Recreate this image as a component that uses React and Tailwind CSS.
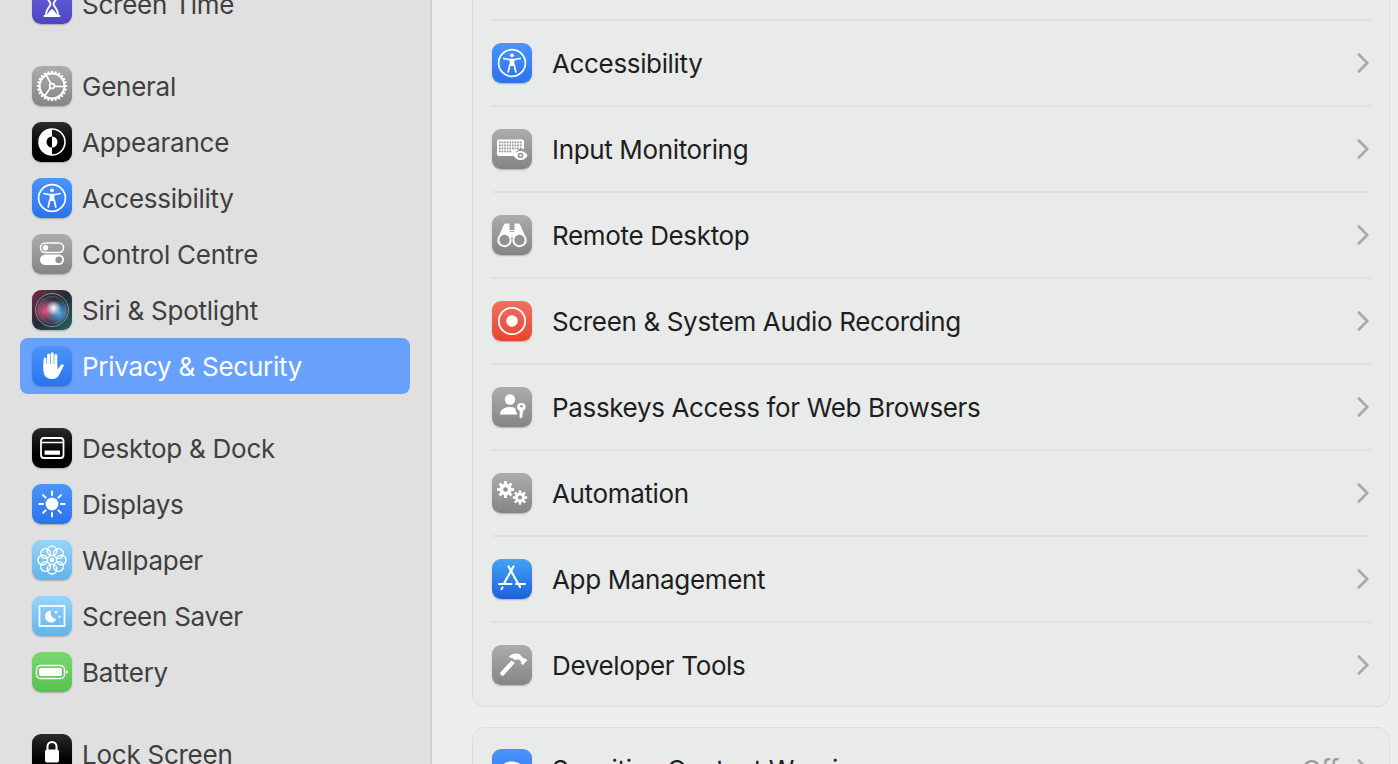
import { useId } from "react";
import { ChevronRight } from "lucide-react";

const Svg = ({ children }) => (
  <svg viewBox="0 0 40 40" className="w-10 h-10 block" fill="none">
    {children}
  </svg>
);

const range = (n) => Array.from({ length: n }, (_, i) => i);

const Cog = ({ cx, cy, r, teeth = 8, toothW = 2, toothH = 2, hole }) => (
  <g>
    {range(teeth).map((i) => (
      <rect
        key={i}
        x={cx - toothW / 2}
        y={cy - r - toothH}
        width={toothW}
        height={toothH + 1}
        fill="#fff"
        transform={`rotate(${(i * 360) / teeth} ${cx} ${cy})`}
      />
    ))}
    <circle cx={cx} cy={cy} r={r} fill="#fff" />
    <circle cx={cx} cy={cy} r={hole} fill="#929295" />
  </g>
);

const GeneralIcon = () => (
  <Svg>
    {range(24).map((i) => (
      <rect
        key={i}
        x="18.9"
        y="4.8"
        width="2.2"
        height="3.4"
        rx="0.6"
        fill="#fff"
        transform={`rotate(${i * 15} 20 20)`}
      />
    ))}
    <circle cx="20" cy="20" r="12.4" stroke="#fff" strokeWidth="2" />
    <g stroke="#fff" strokeWidth="1.7">
      <circle cx="20" cy="20" r="2.4" />
      <path d="M19 17.8 14.500 9.500M22.400 20.300 32 20.500M18.500 21.800 13 29.500" />
    </g>
  </Svg>
);

const AppearanceIcon = () => (
  <Svg>
    <circle cx="20" cy="20" r="13" stroke="#fff" strokeWidth="1.6" />
    <path d="M20 7a13 13 0 0 0 0 26z" fill="#fff" />
    <path d="M20 14.5a5.5 5.5 0 0 0 0 11z" fill="#000" />
    <path d="M20 14.5a5.5 5.5 0 0 1 0 11z" fill="#fff" />
  </Svg>
);

const AccessibilityIcon = () => (
  <Svg>
    <circle cx="20" cy="20" r="13.4" stroke="#fff" strokeWidth="1.7" />
    <circle cx="20" cy="12.300" r="1.900" fill="#fff" />
    <path
      d="M11.800 15.500 17 16.500h6l5.200-1M16.200 29 17.800 22M23.800 29 22.200 22"
      stroke="#fff"
      strokeWidth="1.700"
      strokeLinecap="round"
      strokeLinejoin="round"
    />
    <path d="M17.500 16.500h5l-.4 6.500h-4.200z" fill="#fff" />
  </Svg>
);

const ControlIcon = () => (
  <Svg>
    <rect x="8.5" y="9" width="23" height="9.5" rx="4.75" stroke="#fff" strokeWidth="1.5" />
    <circle cx="13.5" cy="13.8" r="2.8" fill="#fff" />
    <rect x="8" y="20.5" width="24" height="10.5" rx="5.2" fill="#fff" />
    <circle cx="26.8" cy="25.8" r="3.4" fill="#929295" />
  </Svg>
);

const SiriIcon = () => {
  const id = useId();
  return (
    <Svg>
      <defs>
        <radialGradient id={`${id}a`} cx="0.3" cy="0.52" r="0.42">
          <stop offset="0" stopColor="#e8547f" />
          <stop offset="1" stopColor="#e8547f" stopOpacity="0" />
        </radialGradient>
        <radialGradient id={`${id}b`} cx="0.72" cy="0.6" r="0.42">
          <stop offset="0" stopColor="#4fa6e6" />
          <stop offset="1" stopColor="#4fa6e6" stopOpacity="0" />
        </radialGradient>
        <radialGradient id={`${id}c`} cx="0.55" cy="0.44" r="0.24">
          <stop offset="0" stopColor="#fff" />
          <stop offset="1" stopColor="#fff" stopOpacity="0" />
        </radialGradient>
      </defs>
      <circle cx="20" cy="20" r="16.5" fill="#2c3340" stroke="#7f8f92" strokeWidth="1" />
      <circle cx="20" cy="20" r="13.5" stroke="#56636b" strokeWidth="0.8" />
      <circle cx="20" cy="20" r="16" fill={`url(#${id}a)`} />
      <circle cx="20" cy="20" r="16" fill={`url(#${id}b)`} />
      <circle cx="20" cy="20" r="16" fill={`url(#${id}c)`} />
    </Svg>
  );
};

const HandIcon = () => (
  <Svg>
    <g fill="#fff">
      <rect x="11.500" y="11.500" width="3" height="14" rx="1.500" />
      <rect x="15.100" y="7.500" width="3" height="16" rx="1.500" />
      <rect x="18.700" y="6.300" width="3" height="16" rx="1.500" />
      <rect x="22.300" y="8" width="3" height="16" rx="1.500" />
      <path d="M11.500 18v6.500c0 5 3.500 8.500 8.500 8.500 4 0 6-2 7.500-5l4-7.800c.8-1.600-1.500-3-2.700-1.200l-3.600 4.800V18z" />
    </g>
  </Svg>
);

const DesktopIcon = () => (
  <Svg>
    <rect x="9" y="10" width="22.5" height="20" rx="3" stroke="#fff" strokeWidth="1.8" />
    <path d="M9 14.5h22.5" stroke="#fff" strokeWidth="1.4" />
    <rect x="12.5" y="22.5" width="15.5" height="4.2" rx="0.6" fill="#fff" />
  </Svg>
);

const DisplaysIcon = () => (
  <Svg>
    <circle cx="20" cy="20" r="6.4" fill="#fff" />
    {range(8).map((i) => (
      <path
        key={i}
        d="M20 7.4v3.6"
        stroke="#fff"
        strokeWidth="2"
        strokeLinecap="round"
        transform={`rotate(${i * 45} 20 20)`}
      />
    ))}
  </Svg>
);

const WallpaperIcon = () => (
  <Svg>
    {range(8).map((i) => (
      <circle
        key={i}
        cx="20"
        cy="10.800"
        r="4.800"
        stroke="#fff"
        strokeWidth="1.400"
        transform={`rotate(${i * 45} 20 20)`}
      />
    ))}
    <circle cx="20" cy="20" r="2.4" fill="#fff" />
  </Svg>
);

const ScreenSaverIcon = () => (
  <Svg>
    <rect x="7.5" y="10" width="25" height="20" stroke="#fff" strokeWidth="1.7" />
    <path d="M19 14.5a6 6 0 1 0 5.2 9 6.6 6.6 0 0 1-5.2-9z" fill="#fff" />
    <path
      d="M24 14l.6 1.6 1.6.6-1.6.6-.6 1.6-.6-1.6-1.6-.6 1.6-.6zM27.5 19l.5 1.3 1.3.5-1.3.5-.5 1.3-.5-1.3-1.3-.5 1.3-.5z"
      fill="#fff"
    />
  </Svg>
);

const BatteryIcon = () => (
  <Svg>
    <rect x="4.5" y="13.5" width="28" height="13" rx="4" stroke="#fff" strokeWidth="1.3" />
    <rect x="7" y="16" width="23" height="8" rx="2" fill="#fff" />
    <path d="M34 18v4c1-.3 1.6-1.1 1.6-2s-.6-1.700-1.600-2z" fill="#fff" />
  </Svg>
);

const LockIcon = () => (
  <Svg>
    <path d="M15.500 16v-3.500a4.500 4.500 0 0 1 9 0V16" stroke="#fff" strokeWidth="2" />
    <rect x="13" y="15.500" width="14" height="13" rx="2" fill="#fff" />
    {range(5).map((i) => (
      <circle key={i} cx={12 + i * 4} cy="35" r="1.300" fill="#fff" />
    ))}
  </Svg>
);

const KeyboardEyeIcon = () => (
  <Svg>
    <path
      d="M7 10.500h23a2 2 0 0 1 2 2V20a7 7 0 0 0-9 7H7a2 2 0 0 1-2-2V12.500a2 2 0 0 1 2-2z"
      fill="#fff"
    />
    <g fill="#929295">
      {range(4).map((row) =>
        range(row === 3 ? 5 : 9).map((col) => (
          <rect key={`${row}-${col}`} x={7 + col * 2.600} y={12.500 + row * 3} width="1.700" height="1.800" />
        ))
      )}
    </g>
    <path d="M21.500 26.500c1.800-3 4-4.500 7-4.500s5.200 1.500 7 4.500c-1.800 3-4 4.500-7 4.500s-5.200-1.500-7-4.500z" fill="#fff" />
    <circle cx="28.500" cy="26.500" r="2.800" fill="#929295" />
    <circle cx="28.500" cy="26.500" r="1.200" fill="#fff" />
  </Svg>
);

const BinocularsIcon = () => (
  <Svg>
    <path
      d="M14 8.500h3.500v6.500h5V8.500H26c1.200 0 2 .6 2.400 1.700L33 21H7l4.600-10.800C12 9.100 12.800 8.500 14 8.500z"
      fill="#fff"
    />
    <circle cx="12.500" cy="25" r="6.200" fill="#929295" stroke="#fff" strokeWidth="2" />
    <circle cx="27.500" cy="25" r="6.200" fill="#929295" stroke="#fff" strokeWidth="2" />
    <rect x="17.500" y="18" width="5" height="4.500" fill="#fff" />
    <path d="M18 16.500h4" stroke="#929295" strokeWidth="0.800" />
  </Svg>
);

const RecordIcon = () => (
  <Svg>
    <circle cx="20" cy="20" r="13.200" stroke="#fff" strokeWidth="1.800" />
    <circle cx="20" cy="20" r="5.800" fill="#fff" />
  </Svg>
);

const PasskeyIcon = () => (
  <Svg>
    <circle cx="18" cy="12.500" r="5.200" fill="#fff" />
    <path d="M8 27.500c0-5 4.500-7.500 10-7.500 2 0 3.800.3 5.300 1a6 6 0 0 0 1.700 4.700v1.800z" fill="#fff" />
    <path
      d="M29.500 16a4 4 0 0 1 1.600 7.700v2.100l-1 1 1 1-1 1 .6 1-1.700 1.700-1.400-1.400v-6.400A4 4 0 0 1 29.500 16z"
      fill="#fff"
    />
    <circle cx="29.500" cy="19.300" r="1.200" fill="#929295" />
  </Svg>
);

const AutomationIcon = () => (
  <Svg>
    <Cog cx={13.500} cy={16.500} r={6} teeth={8} toothW={2.800} toothH={2.500} hole={2.300} />
    <Cog cx={28} cy={24.500} r={5} teeth={8} toothW={2.400} toothH={2.200} hole={2} />
  </Svg>
);

const AppStoreIcon = () => (
  <Svg>
    <g stroke="#fff" strokeLinecap="round" fill="none">
      <path d="M21.500 7.500 12.500 23.500" strokeWidth="2.200" />
      <path d="M16.500 7.500 28 28" strokeWidth="2.200" />
      <path d="M7 25h12.500M24 25h9" strokeWidth="2" />
      <path d="M10.500 28.500 9.500 30" strokeWidth="2.200" />
    </g>
  </Svg>
);

const HammerIcon = () => (
  <Svg>
    <path
      d="M19.500 15.500 8.500 27.300c-1 1 .2 3.200 2 3.400.5 0 1-.2 1.300-.5l11-12.200z"
      fill="#fff"
    />
    <path
      d="M17 11.500c3-3 7.500-4 11-2.200l1 1.700 2.800 2.600 1.500-.4 2 2-4.500 4.800-2-2 .3-1.500-1.800-1.800c-2-.4-3.500-.4-4.600.5-1.200-1.600-3-2.700-5.200-2.700z"
      fill="#fff"
    />
  </Svg>
);

const EyeIcon = () => (
  <Svg>
    <path d="M6 21c3.500-5.500 8-8.500 14-8.500S30.500 15.500 34 21c-3.500 5.500-8 8.500-14 8.500S9.500 26.500 6 21z" fill="#fff" />
    <circle cx="20" cy="21" r="5" fill="#2f7cf6" />
  </Svg>
);

const ScreenTimeIcon = () => (
  <Svg>
    <path d="M12.500 8h15M12.500 32h15" stroke="#fff" strokeWidth="2" strokeLinecap="round" />
    <path d="M14 9c0 7 4.500 8 4.500 11S14 24 14 31h12c0-7-4.500-8-4.500-11S26 16 26 9z" stroke="#fff" strokeWidth="1.800" />
    <path d="M15.500 31c.5-3 3-5 4.500-6 1.500 1 4 3 4.500 6z" fill="#fff" />
  </Svg>
);

const tones = {
  gray: "bg-linear-to-b from-[#acacaf] to-[#858588]",
  black: "bg-linear-to-b from-[#2b2b2b] to-[#000000]",
  blue: "bg-linear-to-b from-[#4a94fa] to-[#2a73ee]",
  indigo: "bg-linear-to-b from-[#6a63dc] to-[#4b45c0]",
  sky: "bg-linear-to-b from-[#96d5f8] to-[#62b2e8]",
  green: "bg-linear-to-b from-[#7bd771] to-[#58c150]",
  red: "bg-linear-to-b from-[#f07062] to-[#e8432f]",
  store: "bg-linear-to-b from-[#46a3f2] to-[#1f5fdc]",
  siri: "bg-linear-to-br from-[#7a2244] via-[#1f2a3a] to-[#1d6a60]",
};

const Tile = ({ tone, icon: Icon }) => (
  <div className={`w-10 h-10 shrink-0 rounded-[9px] overflow-hidden shadow-[0_1px_1.5px_rgba(0,0,0,0.25)] ${tones[tone]}`}>
    {Icon && <Icon />}
  </div>
);

const sidebarGroups = [
  [{ label: "Screen Time", tone: "indigo", icon: ScreenTimeIcon }],
  [
    { label: "General", tone: "gray", icon: GeneralIcon },
    { label: "Appearance", tone: "black", icon: AppearanceIcon },
    { label: "Accessibility", tone: "blue", icon: AccessibilityIcon },
    { label: "Control Centre", tone: "gray", icon: ControlIcon },
    { label: "Siri & Spotlight", tone: "siri", icon: SiriIcon },
    { label: "Privacy & Security", tone: "blue", icon: HandIcon, active: true },
  ],
  [
    { label: "Desktop & Dock", tone: "black", icon: DesktopIcon },
    { label: "Displays", tone: "blue", icon: DisplaysIcon },
    { label: "Wallpaper", tone: "sky", icon: WallpaperIcon },
    { label: "Screen Saver", tone: "sky", icon: ScreenSaverIcon },
    { label: "Battery", tone: "green", icon: BatteryIcon },
  ],
  [{ label: "Lock Screen", tone: "black", icon: LockIcon }],
];

const rows = [
  { label: "Accessibility", tone: "blue", icon: AccessibilityIcon },
  { label: "Input Monitoring", tone: "gray", icon: KeyboardEyeIcon },
  { label: "Remote Desktop", tone: "gray", icon: BinocularsIcon },
  { label: "Screen & System Audio Recording", tone: "red", icon: RecordIcon },
  { label: "Passkeys Access for Web Browsers", tone: "gray", icon: PasskeyIcon },
  { label: "Automation", tone: "gray", icon: AutomationIcon },
  { label: "App Management", tone: "store", icon: AppStoreIcon },
  { label: "Developer Tools", tone: "gray", icon: HammerIcon },
];

const Row = ({ label, tone, icon, value, height = "h-[86px]" }) => (
  <div className={`ml-[19px] mr-[18px] shrink-0 flex items-center gap-5 border-t-2 border-[#dfe1e0] first:border-t-0 ${height}`}>
    <Tile tone={tone} icon={icon} />
    <span className="flex-1 text-[#1e1e1e] whitespace-nowrap tracking-[-0.35px]">{label}</span>
    {value && <span className="text-[#9a9b9b] -mr-[13px]">{value}</span>}
    <ChevronRight size={34} strokeWidth={1.9} className="text-[#a9aaaa] -mr-[9px] shrink-0" />
  </div>
);

export default function App() {
  return (
    <div className="h-[764px] w-[1398px] flex overflow-hidden bg-[#edefee] text-[26px] font-['Inter',sans-serif] tracking-[-0.25px]">
      <aside className="w-[432px] shrink-0 h-full overflow-hidden bg-[#e0e0e0] border-r-2 border-[#cfcfcf] px-5">
        <div className="-mt-6 flex flex-col gap-[26px]">
          {sidebarGroups.map((group) => (
            <div key={group[0].label} className="flex flex-col">
              {group.map((item) => (
                <div
                  key={item.label}
                  className={`h-14 shrink-0 flex items-center gap-2.5 pl-3 pr-[11px] rounded-lg ${item.active ? "bg-[#68a1fb] text-white" : "text-[#3f3f3f]"}`}
                >
                  <Tile tone={item.tone} icon={item.icon} />
                  <span>{item.label}</span>
                </div>
              ))}
            </div>
          ))}
        </div>
      </aside>

      <main className="flex-1 min-w-0 h-full overflow-hidden pl-10 pr-2">
        <div className="-mt-[66px] flex flex-col gap-5">
          <div className="h-[773px] overflow-hidden shrink-0 rounded-xl border border-[#dcdedd] bg-[#e9eaea] flex flex-col">
            <div className="h-[84px] shrink-0" />
            {rows.map((row) => (
              <Row key={row.label} {...row} />
            ))}
          </div>
          <div className="shrink-0 rounded-xl border border-[#dcdedd] bg-[#e9eaea] flex flex-col">
            <Row label="Sensitive Content Warning" tone="blue" icon={EyeIcon} value="Off" height="h-[82px]" />
          </div>
        </div>
      </main>
    </div>
  );
}
